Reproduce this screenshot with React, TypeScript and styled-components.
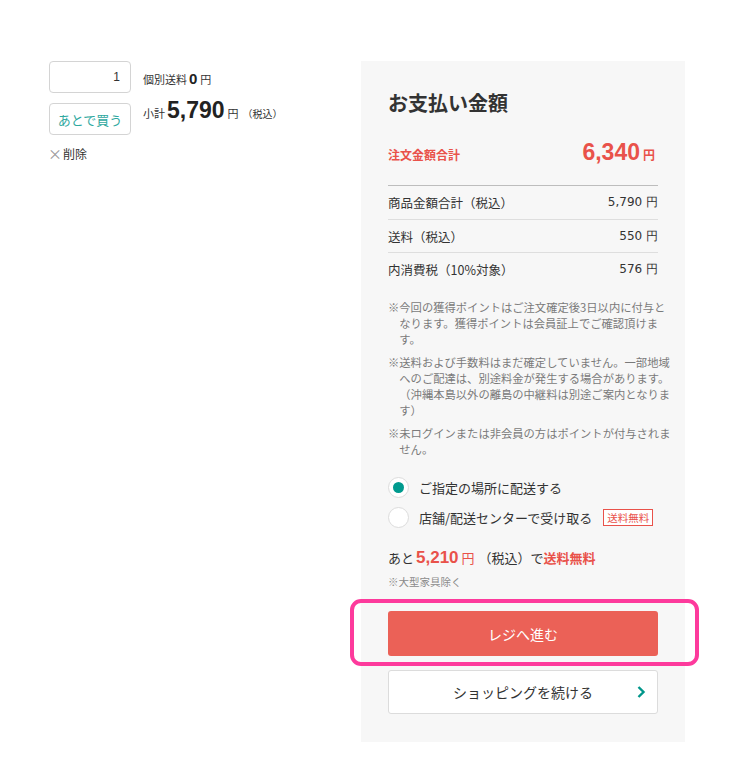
import React from "react";
import styled, { createGlobalStyle } from "styled-components";

const Global = createGlobalStyle`
  html, body { margin: 0; padding: 0; background: #fff; }
  body { font-family: "Noto Sans CJK JP", "Noto Sans", sans-serif; color: #333; }
  * { box-sizing: border-box; }
`;

const Page = styled.div`
  display: flex;
  align-items: flex-start;
  padding: 61px 0 20px 49px;
`;

const LeftCol = styled.div`
  width: 312px;
  display: flex;
  flex-direction: column;
`;

const ItemRow = styled.div`
  display: flex;
  gap: 12px;
`;

const Controls = styled.div`
  display: flex;
  flex-direction: column;
  gap: 10px;
  width: 82px;
`;

const QtyBox = styled.div`
  height: 32px;
  border: 1px solid #d4d4d4;
  border-radius: 4px;
  display: flex;
  align-items: center;
  justify-content: flex-end;
  padding-right: 10px;
  font-family: "Liberation Sans", Arial, sans-serif;
  font-size: 12px;
  color: #333;
`;

const LaterButton = styled.div`
  height: 32px;
  border: 1px solid #d4d4d4;
  border-radius: 4px;
  display: flex;
  align-items: center;
  justify-content: center;
  font-size: 13px;
  color: #2fa8a0;
`;

const Info = styled.div`
  display: flex;
  flex-direction: column;
  padding-top: 6px;
`;

const InfoLine = styled.div<{ $h: number }>`
  display: flex;
  align-items: baseline;
  height: ${(p) => p.$h}px;
  line-height: ${(p) => p.$h}px;
  white-space: nowrap;
`;

const Small = styled.span<{ $size?: number; $ml?: number }>`
  font-size: ${(p) => p.$size ?? 11}px;
  margin-left: ${(p) => p.$ml ?? 0}px;
  color: #333;
`;

const Num = styled.span<{ $size: number }>`
  font-family: "Liberation Sans", Arial, sans-serif;
  font-weight: 700;
  font-size: ${(p) => p.$size}px;
  margin: 0 3px 0 2px;
  color: #222;
`;

const Remove = styled.div`
  margin-top: 8px;
  display: flex;
  align-items: center;
  gap: 1px;
  font-size: 12px;
  color: #333;
  margin-left: -1px;
`;

const Cross = styled.span`
  color: #999;
  font-size: 14px;
`;

const Panel = styled.div`
  width: 324px;
  background: #f7f7f7;
  padding: 28px 27px 28px 27px;
  display: flex;
  flex-direction: column;
`;

const Title = styled.h2`
  margin: 0;
  font-size: 20px;
  line-height: 28px;
  font-weight: 700;
  color: #333;
`;

const TotalRow = styled.div`
  margin-top: 20px;
  height: 30px;
  display: flex;
  align-items: baseline;
  justify-content: space-between;
  padding-right: 3px;
  color: #e9524a;
  line-height: 30px;
`;

const TotalLabel = styled.span`
  font-size: 12px;
  font-weight: 700;
`;

const TotalValue = styled.span`
  font-family: "Liberation Sans", Arial, sans-serif;
  font-size: 23px;
  font-weight: 700;
`;

const Yen = styled.span<{ $size?: number }>`
  font-family: "Noto Sans CJK JP", sans-serif;
  font-size: ${(p) => p.$size ?? 12}px;
  font-weight: 700;
  margin-left: 3px;
`;

const Table = styled.div`
  margin-top: 18px;
  border-top: 1px solid #bdbdbd;
`;

const TRow = styled.div`
  height: 33px;
  display: flex;
  align-items: center;
  justify-content: space-between;
  font-size: 12.5px;
  color: #333;
  & + & { border-top: 1px solid #dedede; }
`;

const TValue = styled.span`
  font-family: "DejaVu Sans", Verdana, sans-serif;
  font-size: 12px;
`;

const Notes = styled.div`
  margin-top: 14px;
  display: flex;
  flex-direction: column;
  gap: 7px;
`;

const Note = styled.p`
  margin: 0;
  font-size: 11.3px;
  line-height: 16px;
  color: #7a7a7a;
  padding-left: 1em;
  text-indent: -1em;
  white-space: nowrap;
`;

const Options = styled.div`
  margin-top: 15px;
  display: flex;
  flex-direction: column;
`;

const Option = styled.label`
  height: 30px;
  display: flex;
  align-items: center;
  gap: 10px;
  font-size: 13px;
  color: #333;
`;

const Radio = styled.span<{ $checked?: boolean }>`
  width: 21px;
  height: 21px;
  border-radius: 50%;
  background: #fff;
  border: 1.5px solid #dcdcdc;
  display: flex;
  align-items: center;
  justify-content: center;
  &::after {
    content: "";
    width: 11px;
    height: 11px;
    border-radius: 50%;
    background: ${(p) => (p.$checked ? "#009a8e" : "transparent")};
  }
`;

const FreeTag = styled.span`
  margin-left: 1px;
  font-size: 10.5px;
  color: #e9524a;
  border: 1px solid #e9524a;
  padding: 0 3px;
  line-height: 15px;
  background: #fff;
`;

const FreeLine = styled.div`
  margin-top: 14px;
  height: 24px;
  display: flex;
  align-items: baseline;
  font-size: 13px;
  color: #333;
  line-height: 24px;
  white-space: nowrap;
`;

const RedNum = styled.span`
  font-family: "Liberation Sans", Arial, sans-serif;
  font-weight: 700;
  font-size: 17px;
  color: #e9524a;
  margin-left: 2px;
`;

const RedText = styled.span<{ $bold?: boolean; $ml?: number }>`
  color: #e9524a;
  font-weight: ${(p) => (p.$bold ? 700 : 400)};
  margin-left: ${(p) => p.$ml ?? 3}px;
`;

const Plain = styled.span`
  margin-left: 4px;
`;

const Exclude = styled.div`
  margin-top: 4px;
  font-size: 10.5px;
  line-height: 16px;
  color: #8a8a8a;
`;

const CheckoutWrap = styled.div`
  position: relative;
  margin-top: 21px;
  &::before {
    content: "";
    position: absolute;
    left: -38px;
    right: -41px;
    top: -12px;
    bottom: -10px;
    border: 4px solid #fd3a9c;
    border-radius: 11px;
    pointer-events: none;
  }
`;

const CheckoutButton = styled.button`
  width: 100%;
  height: 45px;
  border: none;
  border-radius: 3px;
  background: #eb6157;
  color: #fff;
  font-family: "Noto Sans CJK JP", sans-serif;
  font-size: 14px;
  display: flex;
  align-items: center;
  justify-content: center;
`;

const ContinueButton = styled.button`
  margin-top: 14px;
  width: 100%;
  height: 44px;
  border: 1px solid #dcdcdc;
  border-radius: 3px;
  background: #fff;
  color: #333;
  font-family: "Noto Sans CJK JP", sans-serif;
  font-size: 14px;
  position: relative;
  display: flex;
  align-items: center;
  justify-content: center;
`;

const Chevron = styled.svg`
  position: absolute;
  right: 11px;
  top: 50%;
  transform: translateY(-50%);
`;

export default function App() {
  return (
    <>
      <Global />
      <Page>
        <LeftCol>
          <ItemRow>
            <Controls>
              <QtyBox>1</QtyBox>
              <LaterButton>あとで買う</LaterButton>
            </Controls>
            <Info>
              <InfoLine $h={24}>
                <Small>個別送料</Small>
                <Num $size={15}>0</Num>
                <Small>円</Small>
              </InfoLine>
              <InfoLine $h={38}>
                <Small>小計</Small>
                <Num $size={23}>5,790</Num>
                <Small>円</Small>
                <Small $size={10} $ml={4}>（税込）</Small>
              </InfoLine>
            </Info>
          </ItemRow>
          <Remove>
            <Cross>×</Cross>削除
          </Remove>
        </LeftCol>

        <Panel>
          <Title>お支払い金額</Title>
          <TotalRow>
            <TotalLabel>注文金額合計</TotalLabel>
            <TotalValue>
              6,340<Yen>円</Yen>
            </TotalValue>
          </TotalRow>
          <Table>
            <TRow>
              <span>商品金額合計（税込）</span>
              <TValue>5,790 円</TValue>
            </TRow>
            <TRow>
              <span>送料（税込）</span>
              <TValue>550 円</TValue>
            </TRow>
            <TRow>
              <span>内消費税（10%対象）</span>
              <TValue>576 円</TValue>
            </TRow>
          </Table>
          <Notes>
            <Note>
              ※今回の獲得ポイントはご注文確定後3日以内に付与と
              <br />
              なります。獲得ポイントは会員証上でご確認頂けま
              <br />
              す。
            </Note>
            <Note>
              ※送料および手数料はまだ確定していません。一部地域
              <br />
              へのご配達は、別途料金が発生する場合があります。
              <br />
              （沖縄本島以外の離島の中継料は別途ご案内となりま
              <br />
              す）
            </Note>
            <Note>
              ※未ログインまたは非会員の方はポイントが付与されま
              <br />
              せん。
            </Note>
          </Notes>
          <Options>
            <Option>
              <Radio $checked />
              ご指定の場所に配送する
            </Option>
            <Option>
              <Radio />
              店舗/配送センターで受け取る
              <FreeTag>送料無料</FreeTag>
            </Option>
          </Options>
          <FreeLine>
            あと<RedNum>5,210</RedNum>
            <RedText>円</RedText>
            <Plain>（税込）で</Plain>
            <RedText $bold $ml={0}>送料無料</RedText>
          </FreeLine>
          <Exclude>※大型家具除く</Exclude>
          <CheckoutWrap>
            <CheckoutButton>レジへ進む</CheckoutButton>
          </CheckoutWrap>
          <ContinueButton>
            ショッピングを続ける
            <Chevron width="10" height="14" viewBox="0 0 10 14">
              <path d="M2.5 2 L7.5 7 L2.5 12" fill="none" stroke="#00968a" strokeWidth="2.4" />
            </Chevron>
          </ContinueButton>
        </Panel>
      </Page>
    </>
  );
}
